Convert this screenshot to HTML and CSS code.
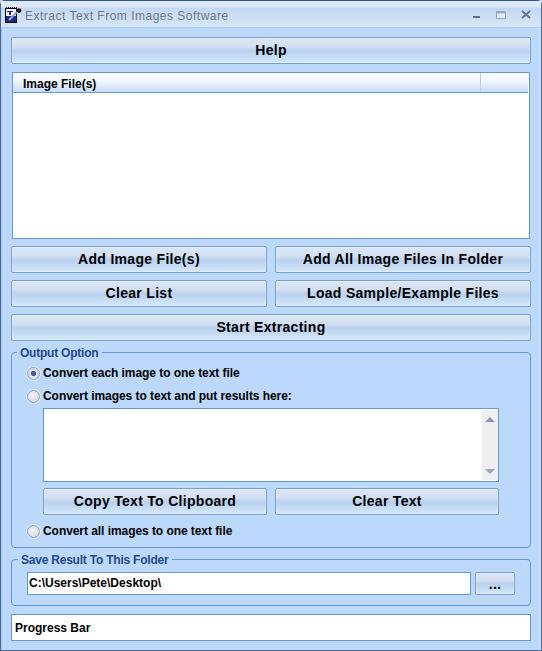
FILE: index.html
```html
<!DOCTYPE html>
<html lang="en">
<head>
<meta charset="utf-8">
<title>Extract Text From Images Software</title>
<link rel="stylesheet" href="styles.css">
</head>
<body>
<div class="window">
  <header class="titlebar">
    <svg class="app-icon" width="17" height="17" viewBox="0 0 17 17">
      <rect x="0.5" y="1.5" width="11" height="14" fill="#fff" stroke="#000"/>
      <path d="M1 0h1v2H1zM3 0h1v2H3zM5 0h1v2H5zM7 0h1v2H7zM9 0h1v2H9zM11 0h1v2h-1z" fill="#000"/>
      <rect x="1" y="9" width="10" height="6" fill="#1c2a86"/>
      <path d="M2 4h6v1H6v3H4V5H2z" fill="#1a2ab8"/>
      <path d="M4 13l8-8" stroke="#8a9cc8" stroke-width="2"/>
      <path d="M4 13l2-2" stroke="#e8eefa" stroke-width="1"/>
      <circle cx="14" cy="3.6" r="2.4" fill="#1c1c1c"/>
    </svg>
    <span class="title-text">Extract Text From Images Software</span>
    <div class="caption">
      <svg width="9" height="9" viewBox="0 0 9 9"><rect x="1" y="6" width="7" height="2" fill="#5f6f8c"/></svg>
      <svg width="10" height="9" viewBox="0 0 10 9"><rect x="0.5" y="1.5" width="9" height="7" fill="#dfe9f7" stroke="#9aa9c2"/><rect x="0" y="1" width="10" height="2.4" fill="#9aa9c2"/></svg>
      <svg width="10" height="9" viewBox="0 0 10 9"><path d="M1 1l8 7M9 1L1 8" stroke="#66768f" stroke-width="2"/></svg>
    </div>
  </header>
  <main class="content">
    <button class="btn">Help</button>
    <section class="list">
      <div class="list-head"><span class="col-main">Image File(s)</span><span class="col-rest"></span></div>
    </section>
    <div class="btn-row">
      <button class="btn">Add Image File(s)</button>
      <button class="btn">Add All Image Files In Folder</button>
    </div>
    <div class="btn-row">
      <button class="btn">Clear List</button>
      <button class="btn">Load Sample/Example Files</button>
    </div>
    <button class="btn">Start Extracting</button>
    <fieldset class="group output">
      <legend>Output Option</legend>
      <div class="group-body output-body">
        <label class="radio-row"><span class="radio checked"></span>Convert each image to one text file</label>
        <label class="radio-row second"><span class="radio"></span>Convert images to text and put results here:</label>
        <div class="memo">
          <div class="scrollbar">
            <svg width="12" height="6" viewBox="0 0 12 6"><path d="M6 0l5 5H1z" fill="#8a97b8"/></svg>
            <svg width="12" height="6" viewBox="0 0 12 6"><path d="M6 6L1 1h10z" fill="#9aa5c8"/></svg>
          </div>
        </div>
        <div class="btn-row inner">
          <button class="btn">Copy Text To Clipboard</button>
          <button class="btn">Clear Text</button>
        </div>
        <label class="radio-row third"><span class="radio"></span>Convert all images to one text file</label>
      </div>
    </fieldset>
    <fieldset class="group save">
      <legend>Save Result To This Folder</legend>
      <div class="group-body path-row">
        <div class="path">C:\Users\Pete\Desktop\</div>
        <button class="btn browse">...</button>
      </div>
    </fieldset>
    <div class="progress">Progress Bar</div>
  </main>
</div>
</body>
</html>
```
FILE: styles.css
```css
* { box-sizing: border-box; }
html, body { margin: 0; padding: 0; }
body {
  width: 542px;
  height: 651px;
  overflow: hidden;
  font-family: "Liberation Sans", Arial, sans-serif;
  background: #bcd8fb;
}
.window {
  width: 542px;
  height: 651px;
  display: flex;
  flex-direction: column;
  border: 1px solid #4a6a95;
  border-top-color: #38557f;
  border-radius: 5px 5px 0 0;
  background: #bcd8fb;
}
.titlebar {
  height: 27px;
  flex: none;
  display: flex;
  align-items: center;
  padding: 0 10px 0 4px;
  background: linear-gradient(#dde9f8 0, #dde9f8 6px, #c4d8f3 7px, #d7e6f8 26px);
  border-bottom: 1px solid #a9cbf2;
}
.app-icon { flex: none; margin-right: 3px; margin-top: 2px; }
.title-text {
  font-size: 12px;
  letter-spacing: 0.5px;
  color: #6e7787;
  margin-top: 4px;
}
.caption { margin-left: auto; display: flex; align-items: center; gap: 15px; margin-top: 0; }
.caption svg { display: block; }
.content {
  flex: 1;
  display: flex;
  flex-direction: column;
  padding: 9px 10px 0 10px;
  box-shadow: inset 1px 0 0 #a5c6ee, inset -3px 0 0 #c6dcfa;
}
.btn {
  display: block;
  width: 100%;
  height: 27px;
  margin: 0;
  padding: 0 0 1px;
  font-family: "Liberation Sans", Arial, sans-serif;
  font-size: 14px;
  font-weight: 700;
  letter-spacing: 0.3px;
  color: #000;
  border: 1px solid #7c9fd0;
  border-radius: 2px;
  background: linear-gradient(#dbe7f6 0, #d2e0f2 35%, #b9d0ee 52%, #c6dcf5 75%, #d5e9fc 100%);
  box-shadow: inset 0 0 0 1px rgba(255,255,255,.25);
}
.list {
  height: 167px;
  flex: none;
  margin: 8px 1px 7px;
  background: #fff;
  border: 1px solid #6696d4;
}
.list-head {
  height: 20px;
  display: flex;
  margin-right: 1px;
  background: linear-gradient(#fff 0, #f2f7fe 40%, #c6dcf6 100%);
  border-bottom: 1px solid #6696d4;
}
.col-main {
  width: 468px;
  padding: 4px 0 0 10px;
  font-size: 12px;
  font-weight: 700;
  color: #000;
  border-right: 1px solid #b5cdea;
  margin-bottom: 2px;
}
.btn-row { display: flex; gap: 8px; margin-bottom: 7px; }
.btn-row .btn { flex: 1; }
.group {
  margin: 0;
  min-width: 0;
  padding: 0;
  border: 1px solid #6696d4;
  border-radius: 4px;
}
.group legend {
  margin-left: 6px;
  padding: 2px 4px 0 3px;
  font-size: 12px;
  font-weight: 700;
  letter-spacing: -0.22px;
  line-height: 14px;
  color: #1f4a8a;
}
.output legend { margin-left: 5px; }
.output { height: 204px; margin-top: 3px; }
.output-body { padding: 6px 31px 0 15px; }
.radio-row {
  display: flex;
  align-items: center;
  height: 14px;
  font-size: 12px;
  font-weight: 700;
  letter-spacing: -0.06px;
  color: #000;
}
.radio-row.second { margin-top: 9px; }
.radio-row.third { margin-top: 9px; }
.radio {
  width: 13px;
  height: 13px;
  margin-right: 3px;
  flex: none;
  border-radius: 50%;
  border: 1px solid #9aa6b8;
  background: radial-gradient(circle at 40% 40%, #f4f6f9, #c8d0da);
  box-shadow: 0 0 0 1px rgba(240,246,255,.6);
}
.radio.checked { background: radial-gradient(circle, #45608f 0, #45608f 2.4px, #dfe5ee 3px, #c8d0da 100%); }
.memo {
  height: 74px;
  margin: 5px 0 6px 16px;
  background: #fff;
  border: 1px solid #6696d4;
  display: flex;
  justify-content: flex-end;
}
.scrollbar {
  width: 17px;
  margin: 1px 0 1px;
  display: flex;
  flex-direction: column;
  justify-content: space-between;
  align-items: center;
  padding: 7px 0 6px;
  background: #efefef;
  border-left: 1px solid #f8f8f8;
}
.scrollbar svg { display: block; }
.btn-row.inner { margin: 0 0 0 16px; }
.save { height: 55px; margin-top: 3px; }
.path-row { display: flex; gap: 4px; padding: 5px 15px 0 15px; }
.path {
  width: 444px;
  height: 23px;
  padding: 3px 0 0 1px;
  font-size: 12px;
  font-weight: 700;
  background: #fff;
  border: 1px solid #6696d4;
}
.btn.browse { width: 40px; height: 23px; flex: none; font-size: 14px; padding: 0; }
.progress {
  height: 27px;
  margin-top: 8px;
  padding: 6px 0 0 3px;
  font-size: 12px;
  font-weight: 700;
  background: #fff;
  border: 1px solid #6696d4;
}
```
